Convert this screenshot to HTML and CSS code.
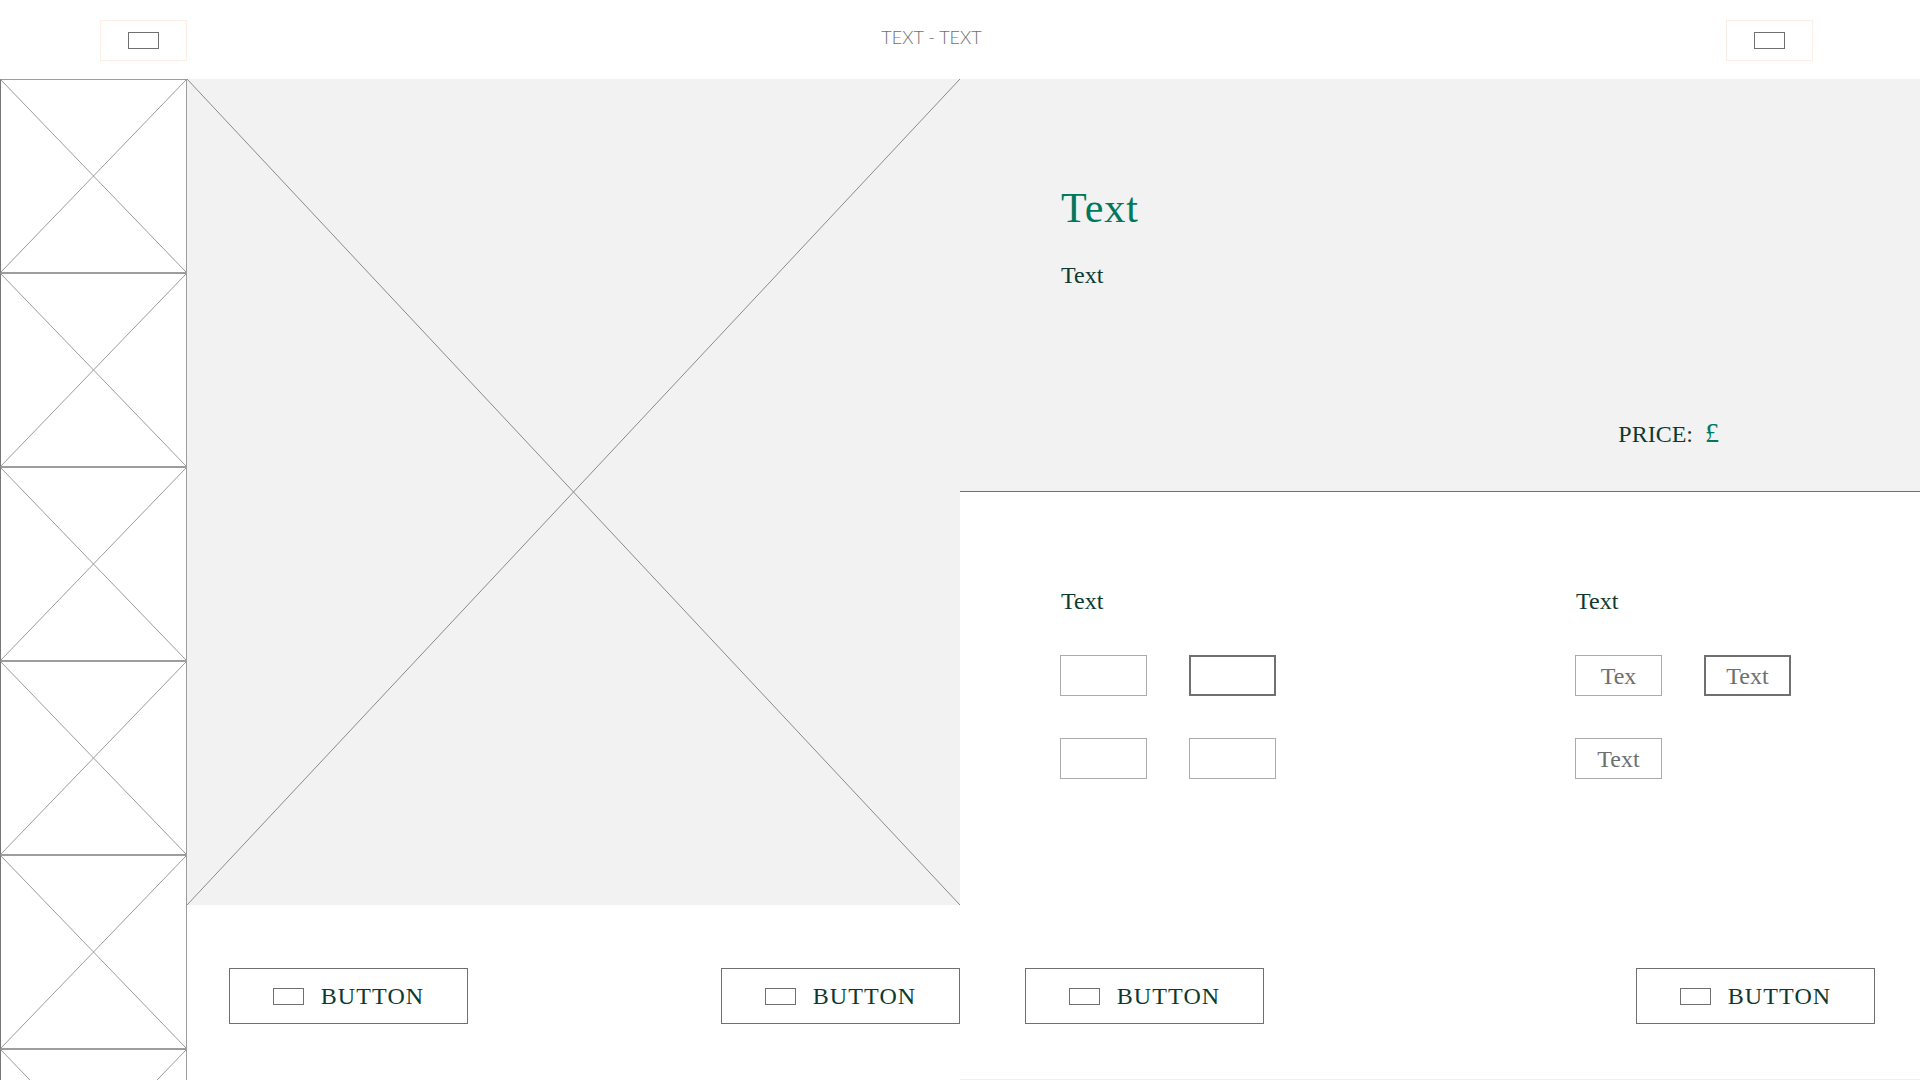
FILE: index.html
```html
<!DOCTYPE html>
<html lang="en">
<head>
<meta charset="utf-8">
<title>Product</title>
<link rel="stylesheet" href="styles.css">
</head>
<body>
<div class="page">
  <header class="topbar">
    <div class="icon-btn"><span class="glyph"></span></div>
    <div class="title">TEXT - TEXT</div>
    <div class="icon-btn"><span class="glyph"></span></div>
  </header>
  <main class="layout">
    <aside class="thumbs">
      <div class="thumb"><svg class="cross" viewBox="0 0 100 100" preserveAspectRatio="none"><line x1="0" y1="0" x2="100" y2="100"/><line x1="100" y1="0" x2="0" y2="100"/></svg></div>
      <div class="thumb"><svg class="cross" viewBox="0 0 100 100" preserveAspectRatio="none"><line x1="0" y1="0" x2="100" y2="100"/><line x1="100" y1="0" x2="0" y2="100"/></svg></div>
      <div class="thumb"><svg class="cross" viewBox="0 0 100 100" preserveAspectRatio="none"><line x1="0" y1="0" x2="100" y2="100"/><line x1="100" y1="0" x2="0" y2="100"/></svg></div>
      <div class="thumb"><svg class="cross" viewBox="0 0 100 100" preserveAspectRatio="none"><line x1="0" y1="0" x2="100" y2="100"/><line x1="100" y1="0" x2="0" y2="100"/></svg></div>
      <div class="thumb"><svg class="cross" viewBox="0 0 100 100" preserveAspectRatio="none"><line x1="0" y1="0" x2="100" y2="100"/><line x1="100" y1="0" x2="0" y2="100"/></svg></div>
      <div class="thumb"><svg class="cross" viewBox="0 0 100 100" preserveAspectRatio="none"><line x1="0" y1="0" x2="100" y2="100"/><line x1="100" y1="0" x2="0" y2="100"/></svg></div>
    </aside>
    <section class="gallery">
      <div class="hero"><svg class="cross" viewBox="0 0 100 100" preserveAspectRatio="none"><line x1="0" y1="0" x2="100" y2="100"/><line x1="100" y1="0" x2="0" y2="100"/></svg></div>
      <div class="actions">
        <button class="btn"><span class="glyph"></span><span class="btn-text">BUTTON</span></button>
        <button class="btn"><span class="glyph"></span><span class="btn-text">BUTTON</span></button>
      </div>
    </section>
    <section class="details">
      <div class="info">
        <h1 class="name">Text</h1>
        <p class="sub">Text</p>
        <div class="price"><span class="price-label">PRICE:</span><span class="currency">£</span></div>
      </div>
      <div class="options">
        <div class="opt-group first">
          <div class="opt-label">Text</div>
          <div class="opt-grid">
            <div class="opt"></div>
            <div class="opt selected"></div>
            <div class="opt"></div>
            <div class="opt"></div>
          </div>
        </div>
        <div class="opt-group">
          <div class="opt-label">Text</div>
          <div class="opt-grid">
            <div class="opt">Tex</div>
            <div class="opt selected">Text</div>
            <div class="opt">Text</div>
          </div>
        </div>
      </div>
      <div class="actions actions-wide">
        <button class="btn"><span class="glyph"></span><span class="btn-text">BUTTON</span></button>
        <button class="btn"><span class="glyph"></span><span class="btn-text">BUTTON</span></button>
      </div>
    </section>
  </main>
</div>
</body>
</html>
```
FILE: styles.css
```css
* { box-sizing: border-box; }
html, body { margin: 0; padding: 0; background: #ffffff; }
body { width: 1920px; height: 1080px; overflow: hidden; font-family: "Liberation Serif", "Times New Roman", serif; }

.page { width: 1920px; height: 1080px; display: flex; flex-direction: column; }

.topbar {
  height: 79px;
  flex: none;
  display: flex;
  align-items: flex-start;
  justify-content: space-between;
  padding: 20px 107px 0 100px;
}
.icon-btn {
  width: 87px;
  height: 41px;
  border: 1px solid #fdeee5;
  display: flex;
  align-items: center;
  justify-content: center;
}
.glyph {
  display: block;
  width: 31px;
  height: 17px;
  border: 1px solid #707070;
  flex: none;
}
.title {
  margin-top: 5px;
  margin-right: 50px;
  font-family: "Lato", "Liberation Sans", sans-serif;
  font-weight: 300;
  font-size: 18px;
  line-height: 24px;
  color: #6f6f6f;
}

.layout {
  flex: 1;
  display: grid;
  grid-template-columns: 187px 773px 960px;
  height: 1001px;
  overflow: hidden;
}

.thumbs { display: flex; flex-direction: column; overflow: hidden; }
.thumb {
  flex: none;
  height: 194px;
  border: 1px solid #9d9d9d;
  border-left-color: #777777;
  background: #ffffff;
}
.cross { display: block; width: 100%; height: 100%; }
.cross line { stroke: #9a9a9a; stroke-width: 1; vector-effect: non-scaling-stroke; }

.gallery { display: flex; flex-direction: column; }
.hero { height: 826px; flex: none; background: #f2f2f2; }
.hero .cross line { stroke: #8a8a8a; }

.actions {
  display: flex;
  justify-content: space-between;
  padding: 63px 0 0 42px;
}
.btn {
  width: 239px;
  height: 56px;
  border: 1px solid #707070;
  background: #ffffff;
  display: flex;
  align-items: center;
  justify-content: center;
  gap: 17px;
  padding: 0;
  margin: 0;
  font: inherit;
  cursor: pointer;
}
.btn-text {
  font-size: 24px;
  line-height: 24px;
  letter-spacing: 1.1px;
  color: #0d3a30;
}

.details {
  display: flex;
  flex-direction: column;
  border-bottom: 1px solid #f0f0f0;
}
.info {
  height: 413px;
  flex: none;
  background: #f2f2f2;
  border-bottom: 1px solid #707070;
  padding: 108px 0 45px 101px;
  display: flex;
  flex-direction: column;
}
.name {
  margin: 0;
  font-weight: 400;
  font-size: 42px;
  line-height: 42px;
  letter-spacing: 1px;
  color: #00785c;
}
.sub {
  margin: 34px 0 0;
  font-size: 24px;
  line-height: 24px;
  color: #0d3a30;
}
.price {
  margin-top: auto;
  display: flex;
  justify-content: flex-end;
  align-items: baseline;
  padding-right: 201px;
  line-height: 24px;
}
.price-label { font-size: 24px; color: #0d3a30; }
.currency { font-size: 28px; color: #00785c; margin-left: 12px; }

.options {
  display: flex;
  padding: 97px 0 0 100px;
}
.opt-group.first { width: 515px; flex: none; }
.opt-label {
  font-size: 24px;
  line-height: 24px;
  color: #0d3a30;
  padding-left: 1px;
}
.opt-grid {
  margin-top: 42px;
  display: grid;
  grid-template-columns: 87px 87px;
  grid-auto-rows: 41px;
  column-gap: 42px;
  row-gap: 42px;
}
.opt {
  border: 1px solid #ababab;
  background: #ffffff;
  font-size: 24px;
  line-height: 40px;
  text-align: center;
  color: #6f6f6f;
}
.opt.selected { border: 2px solid #707070; line-height: 38px; }

.actions-wide {
  margin-top: auto;
  padding: 0 45px 55px 65px;
}
```
